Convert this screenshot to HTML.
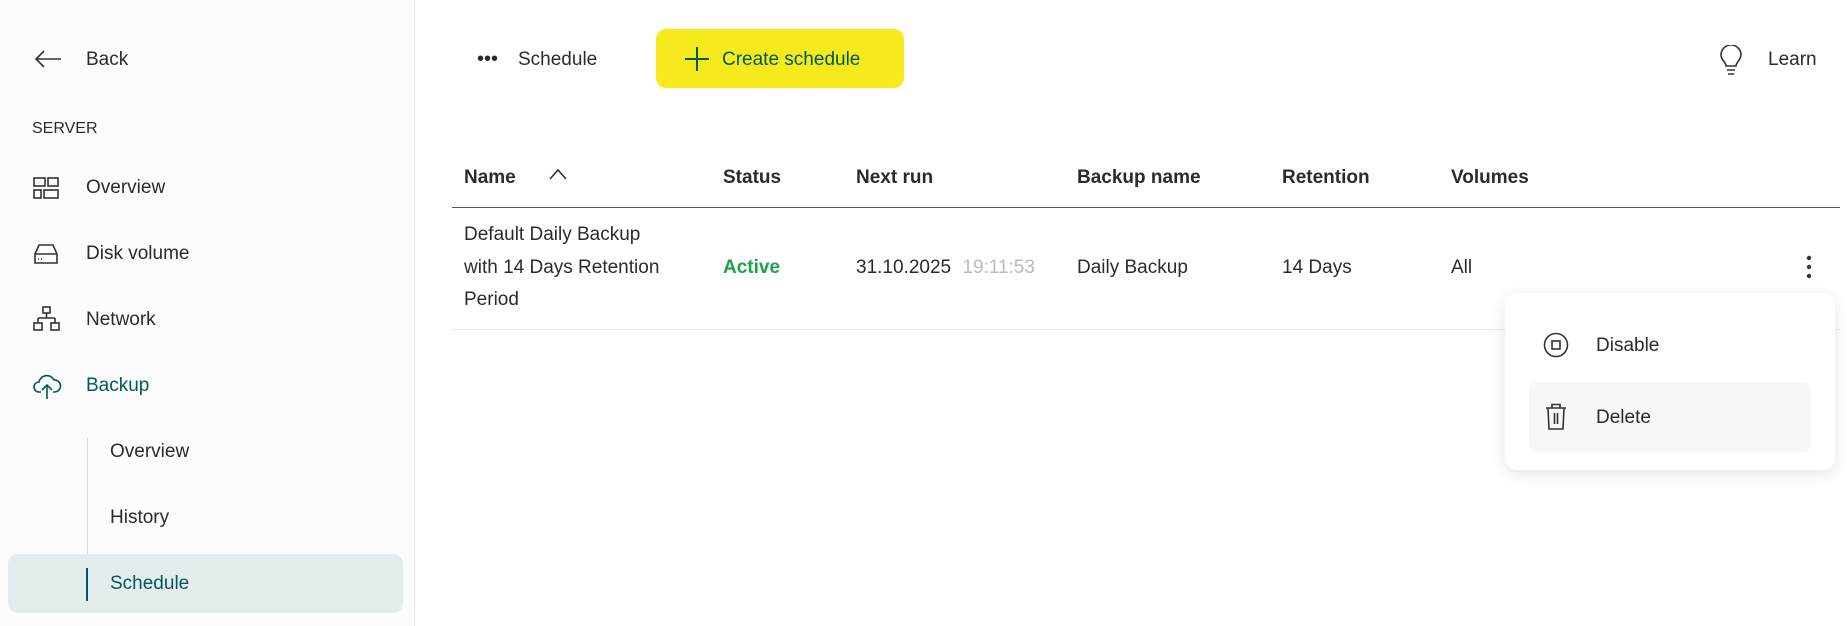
<!DOCTYPE html>
<html><head><meta charset="utf-8"><style>
*{margin:0;padding:0;box-sizing:border-box}
html,body{width:1847px;height:626px;overflow:hidden}
body{background:#fff;font-family:"Liberation Sans",sans-serif;font-size:19px;color:#2b2b2b;position:relative}
.a{position:absolute;white-space:nowrap;line-height:1}
.side{position:absolute;left:0;top:0;width:415px;height:626px;background:#fcfcfc;border-right:1px solid #ececec}
svg{position:absolute;fill:none;stroke:#333;stroke-width:1.6}
.h{font-weight:600}
</style></head><body>
<div class="side"></div>
<svg style="left:33px;top:49px" width="30" height="20" viewBox="0 0 30 20"><path d="M28 10H3M11 2L3 10l8 8"/></svg>
<div class="a" style="left:86px;top:50px">Back</div>
<div class="a" style="left:32px;top:121px;font-size:16px">SERVER</div>
<svg style="left:33px;top:177px" width="28" height="22" viewBox="0 0 28 22"><rect x="1" y="1" width="11" height="8"/><rect x="15" y="1" width="10" height="8"/><rect x="1" y="13" width="7" height="8"/><rect x="11" y="13" width="14" height="8"/></svg>
<div class="a" style="left:86px;top:178px">Overview</div>
<svg style="left:33px;top:243px" width="28" height="22" viewBox="0 0 28 22"><path d="M2 11L6 2h14l4 9v9H2z M2 11h22"/><path d="M5 16h1M8 16h1"/></svg>
<div class="a" style="left:86px;top:244px">Disk volume</div>
<svg style="left:33px;top:306px" width="28" height="26" viewBox="0 0 28 26"><rect x="10" y="1" width="7" height="6"/><path d="M13.5 7v5M5 12h17M5 12v5M22 12v5"/><rect x="1" y="17" width="8" height="7"/><rect x="18" y="17" width="8" height="7"/></svg>
<div class="a" style="left:86px;top:310px">Network</div>
<svg style="left:32px;top:371px;stroke:#005a5e" width="30" height="30" viewBox="0 0 30 30"><path d="M9 21H7a5 5 0 0 1 0-10 8 8 0 0 1 15-2 6 6 0 0 1 1 12h-2"/><path d="M15 28V14M10 19l5-5 5 5"/></svg>
<div class="a" style="left:86px;top:376px;color:#005a5e">Backup</div>
<div style="position:absolute;left:87px;top:438px;width:1px;height:116px;background:#ddd"></div>
<div class="a" style="left:110px;top:442px">Overview</div>
<div class="a" style="left:110px;top:508px">History</div>
<div style="position:absolute;left:8px;top:554px;width:395px;height:59px;background:#e5ecee;border-radius:10px"></div>
<div style="position:absolute;left:86px;top:568px;width:2px;height:33px;background:#005a5e"></div>
<div class="a" style="left:110px;top:574px;color:#005a5e">Schedule</div>

<div class="a" style="left:477px;top:49px;font-size:20px">•••</div>
<div class="a" style="left:518px;top:50px">Schedule</div>
<div style="position:absolute;left:656px;top:29px;width:248px;height:59px;background:#f6ea1c;border-radius:10px"></div>
<svg style="left:684px;top:46px;stroke:#005a4a;stroke-width:2" width="26" height="26" viewBox="0 0 26 26"><path d="M13 1v24M1 13h24"/></svg>
<div class="a" style="left:722px;top:50px;color:#005a4a">Create schedule</div>
<svg style="left:1719px;top:45px" width="24" height="32" viewBox="0 0 24 32"><path d="M7 21c0-4-5-6-5-11a10 10 0 0 1 20 0c0 5-5 7-5 11z M8 25h8M9 29h6"/></svg>
<div class="a" style="left:1768px;top:50px">Learn</div>

<div class="a h" style="left:464px;top:168px">Name</div>
<svg style="left:549px;top:168px" width="18" height="12" viewBox="0 0 18 12"><path d="M1 11L9 2l8 9"/></svg>
<div class="a h" style="left:723px;top:168px">Status</div>
<div class="a h" style="left:856px;top:168px">Next run</div>
<div class="a h" style="left:1077px;top:168px">Backup name</div>
<div class="a h" style="left:1282px;top:168px">Retention</div>
<div class="a h" style="left:1451px;top:168px">Volumes</div>
<div style="position:absolute;left:452px;top:207px;width:1388px;height:1px;background:#555"></div>
<div class="a" style="left:464px;top:225px">Default Daily Backup</div>
<div class="a" style="left:464px;top:258px">with 14 Days Retention</div>
<div class="a" style="left:464px;top:290px">Period</div>
<div class="a" style="left:723px;top:258px;color:#1ea24a;font-weight:bold">Active</div>
<div class="a" style="left:856px;top:258px">31.10.2025 <span style="color:#bbb;margin-left:6px">19:11:53</span></div>
<div class="a" style="left:1077px;top:258px">Daily Backup</div>
<div class="a" style="left:1282px;top:258px">14 Days</div>
<div class="a" style="left:1451px;top:258px">All</div>
<svg style="left:1806px;top:255px;fill:#333;stroke:none" width="6" height="24" viewBox="0 0 6 24"><circle cx="3" cy="3" r="2.2"/><circle cx="3" cy="12" r="2.2"/><circle cx="3" cy="21" r="2.2"/></svg>
<div style="position:absolute;left:452px;top:329px;width:1388px;height:1px;background:#e8e8e8"></div>

<div style="position:absolute;left:1505px;top:293px;width:330px;height:177px;background:#fff;border-radius:12px;box-shadow:0 4px 16px rgba(0,0,0,.1)"></div>
<svg style="left:1543px;top:332px" width="26" height="26" viewBox="0 0 26 26"><circle cx="13" cy="13" r="11.5"/><rect x="9" y="9" width="8" height="8"/></svg>
<div class="a" style="left:1596px;top:336px">Disable</div>
<div style="position:absolute;left:1529px;top:382px;width:282px;height:70px;background:#f7f7f7;border-radius:8px"></div>
<svg style="left:1545px;top:403px" width="22" height="28" viewBox="0 0 22 28"><path d="M1 5h20M7 5V1.5h8V5M3 5l1 21h14l1-21M9.5 10v11M12.5 10v11"/></svg>
<div class="a" style="left:1596px;top:408px">Delete</div>
</body></html>
